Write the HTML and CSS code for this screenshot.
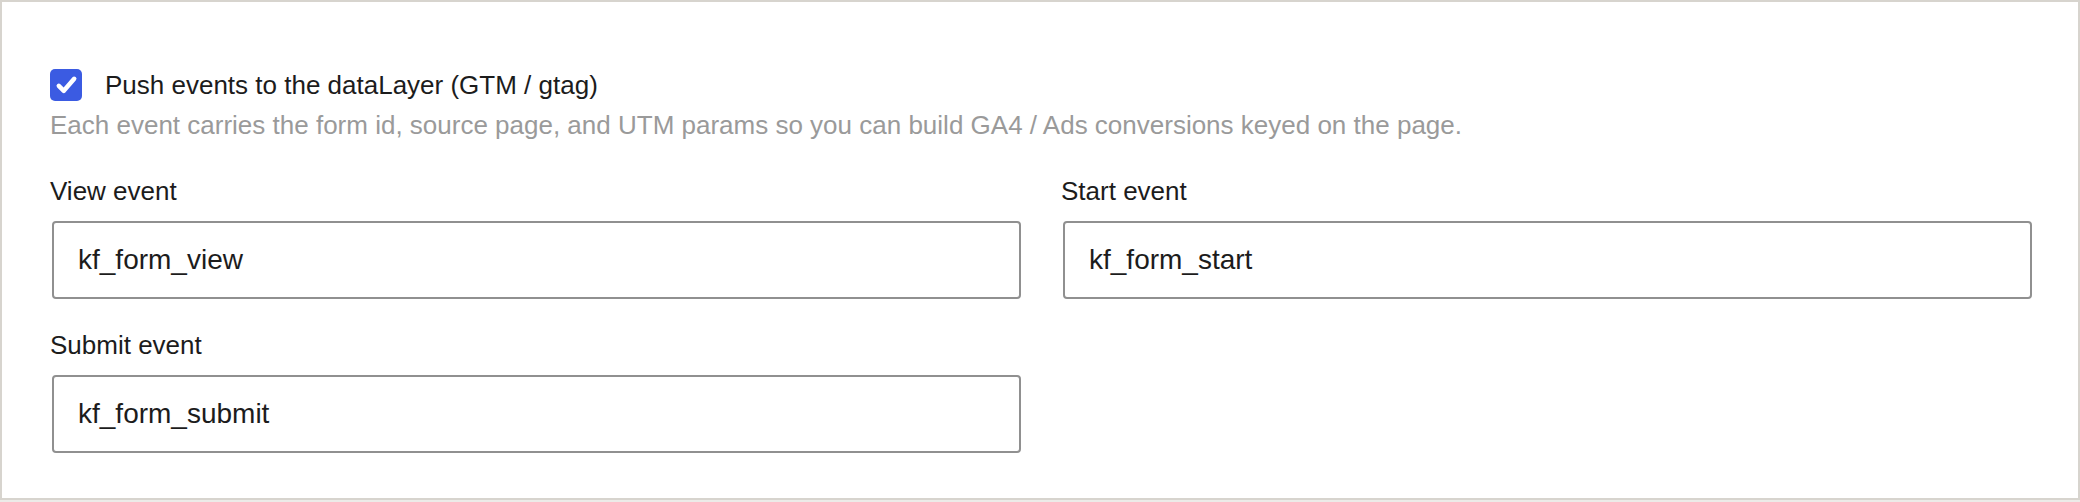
FILE: index.html
```html
<!DOCTYPE html>
<html lang="en">
<head>
<meta charset="utf-8">
<title>Analytics events</title>
<link rel="stylesheet" href="styles.css">
</head>
<body>
<section class="panel">
  <label class="toggle">
    <span class="box" role="checkbox" aria-checked="true">
      <svg viewBox="0 0 32 32" width="32" height="32" aria-hidden="true">
        <polyline points="8.8,16.8 13.8,21.8 24.2,9.8" fill="none" stroke="#fff" stroke-width="4.5" stroke-linecap="round" stroke-linejoin="round"/>
      </svg>
    </span>
    <span class="toggle-text">Push events to the dataLayer (GTM / gtag)</span>
  </label>
  <p class="hint">Each event carries the form id, source page, and UTM params so you can build GA4 / Ads conversions keyed on the page.</p>

  <div class="fields">
    <div class="field">
      <label class="field-label" for="ev-view">View event</label>
      <input class="field-input" id="ev-view" type="text" value="kf_form_view">
    </div>
    <div class="field">
      <label class="field-label" for="ev-start">Start event</label>
      <input class="field-input" id="ev-start" type="text" value="kf_form_start">
    </div>
    <div class="field">
      <label class="field-label" for="ev-submit">Submit event</label>
      <input class="field-input" id="ev-submit" type="text" value="kf_form_submit">
    </div>
  </div>
</section>
</body>
</html>
```
FILE: styles.css
```css
html, body {
  margin: 0;
  padding: 0;
}

body {
  background: #ecebe8;
  font-family: "Liberation Sans", Arial, sans-serif;
  color: #1c1c1c;
}

.panel {
  box-sizing: border-box;
  width: 2080px;
  height: 500px;
  background: #ffffff;
  border: 2px solid #d7d4ce;
  padding: 67px 46px 0 48px;
}

.toggle {
  display: flex;
  align-items: center;
  gap: 23px;
  height: 32px;
  cursor: pointer;
}

.box {
  flex: none;
  width: 32px;
  height: 32px;
  border-radius: 5px;
  background: #3b5be2;
  display: flex;
}

.toggle-text {
  font-size: 26px;
  line-height: 30px;
  color: #1c1c1c;
}

.hint {
  margin: 9px 0 0 0;
  font-size: 26px;
  line-height: 30px;
  color: #9a9a9a;
}

.fields {
  margin-top: 36px;
  display: grid;
  grid-template-columns: 1fr 1fr;
  column-gap: 40px;
  row-gap: 31px;
}

.field {
  display: flex;
  flex-direction: column;
  align-items: flex-start;
  gap: 15px;
}

.field-label {
  font-size: 26px;
  line-height: 30px;
  color: #1c1c1c;
}

.field-input {
  box-sizing: border-box;
  align-self: stretch;
  height: 78px;
  margin: 0 0 0 2px;
  padding: 0 24px;
  border: 2px solid #909090;
  border-radius: 4px;
  background: #ffffff;
  font-family: "Liberation Sans", Arial, sans-serif;
  font-size: 28px;
  color: #1c1c1c;
  outline: none;
}
```
